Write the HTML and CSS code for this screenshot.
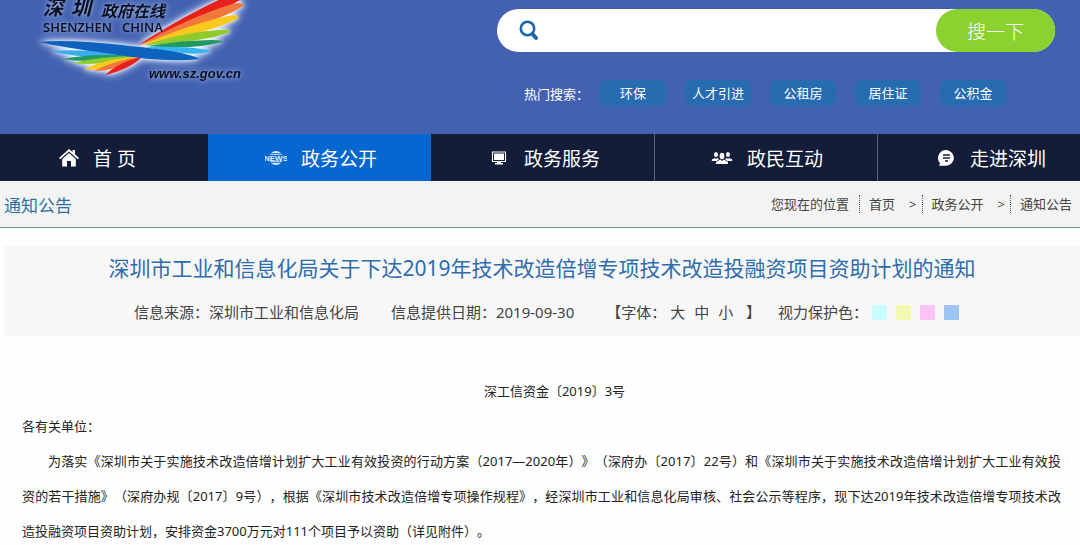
FILE: index.html
```html
<!DOCTYPE html>
<html lang="zh-CN">
<head>
<meta charset="utf-8">
<title>通知公告 - 深圳政府在线</title>
<link rel="stylesheet" href="styles.css">
</head>
<body>
<header class="header">
  <a class="logo" href="#" aria-label="深圳政府在线">
    <svg width="260" height="100" viewBox="0 0 260 100">
      <g class="glow">
        <path fill="#e8201c" d="M138 45 Q185 15 227 -4 Q238 -8 240 0 Q222 12 138 45Z"/>
        <path fill="#f0783a" d="M140 45 Q190 17 232 4 Q244 1 243 6 Q222 20 140 45Z"/>
        <path fill="#fbc81e" d="M142 45 Q190 24 228 16 Q240 14 238 18 Q215 32 142 45Z"/>
        <path fill="#8fcb2c" d="M144 45 Q190 31 221 30 Q232 29 230 32 Q205 42 144 45Z"/>
        <path fill="#1f9a62" d="M146 46 Q185 40 212 40 Q224 40 222 42 Q195 50 146 46Z"/>
        <path fill="#38b4ee" d="M146 47 Q185 46 201 49 Q214 50 209 52 Q190 57 146 47Z"/>
        <path fill="#38aeea" d="M50 51 Q80 48 138 56 Q85 60 50 51Z"/>
        <path fill="#1f9a62" d="M63 59 Q90 53 138 56 Q90 64 63 59Z"/>
        <path fill="#8fcb2c" d="M73 63 Q100 56 139 56 Q98 67 73 63Z"/>
        <path fill="#fbc81e" d="M84 69 Q110 57 140 57 Q104 72 84 69Z"/>
        <path fill="#f0783a" d="M94 71 Q115 60 141 57 Q112 72 94 71Z"/>
        <path fill="#e8201c" d="M105 75 Q118 62 142 57 Q130 69 105 75Z"/>
        <path fill="#0d62be" d="M39 42 Q70 39 130 46 Q185 51 200 59 Q165 63 112 54 Q60 47 39 42Z"/>
      </g>
      <g class="logo-text">
        <text class="logo-mark" x="43" y="15">深</text>
        <text class="logo-mark" x="71" y="15">圳</text>
        <text class="logo-name" x="101" y="17">政府在线</text>
        <text class="logo-latin" x="43" y="32">SHENZHEN</text>
        <text class="logo-latin" x="122" y="32">CHINA</text>
        <text class="logo-url" x="149" y="78">www.sz.gov.cn</text>
      </g>
    </svg>
  </a>
  <div class="search-area">
    <form class="search" role="search">
      <svg class="search-icon" width="20" height="21" viewBox="0 0 20 21"><circle cx="8.500" cy="8.500" r="6.700" fill="none" stroke="#1a67ab" stroke-width="2.600"/><path d="M13.500 14l3.500 4" stroke="#1a67ab" stroke-width="4" stroke-linecap="round"/></svg>
      <input class="search-input" type="text" aria-label="搜索">
      <button class="search-button" type="button">搜一下</button>
    </form>
    <div class="hot">
      <span class="hot-label">热门搜索：</span>
      <a href="#">环保</a><a href="#">人才引进</a><a href="#">公租房</a><a href="#">居住证</a><a href="#">公积金</a>
    </div>
  </div>
</header>
<nav class="nav">
  <a class="home" href="#"><svg width="20" height="18" viewBox="0 0 20 18" fill="#fff"><path d="M0 9 10 0l3.500 3V1H16v4.300L20 9l-1.200 1.200L10 2.500 1.200 10.200z"/><path d="M3.200 10 10 4l6.800 6v7.500H12V12H8v5.500H3.200z"/></svg><span>首 页</span></a>
  <a class="active" href="#"><svg width="22" height="16" viewBox="0 0 22 16"><circle cx="11" cy="8" r="7" fill="#d5e7fb"/><path d="M4 3.500h14M4 12.500h14" stroke="#0567cf" stroke-width=".8" fill="none"/><path fill="#0567cf" d="M0 4.800h22v6.400H0z"/><text class="news" x="11" y="11" text-anchor="middle">NEWS</text></svg><span>政务公开</span></a>
  <a href="#"><svg width="22" height="14" viewBox="0 0 22 14" fill="#fff"><path fill="none" stroke="#fff" stroke-width="1.100" d="M4.500 1h13v9.500h-13z"/><path d="M6 2.500h10V9H6zM9 11h4v1h2v1.500H7V12h2z"/></svg><span>政务服务</span></a>
  <a href="#"><svg width="22" height="14" viewBox="0 0 22 14" fill="#fff"><ellipse cx="5" cy="3.500" rx="2" ry="2.500"/><ellipse cx="17" cy="3.500" rx="2" ry="2.500"/><path d="M.8 10V8.500L4 7l1 1 1.200-1 2 1-2.500 2zM21.200 10V8.500L18 7l-1 1-1.200-1-2 1 2.500 2z"/><ellipse cx="11" cy="5" rx="2.400" ry="3.200"/><path d="M5 13v-2l4.200-2.500L11 10l1.800-1.500L17 11v2z"/></svg><span>政民互动</span></a>
  <a href="#"><svg width="22" height="18" viewBox="0 0 22 18"><path fill="#fff" d="M12 1a8 7.500 0 1 1-1 15.800H5l1-2.500A8 8 0 0 1 12 1z"/><path stroke="#131c38" stroke-width="1.300" d="M9 6h7M9 9h7M11 12h3"/></svg><span>走进深圳</span></a>
</nav>
<div class="location">
  <h2>通知公告</h2>
  <div class="crumbs">
    <span>您现在的位置</span>
    <a href="#">首页</a><i>&gt;</i>
    <a href="#">政务公开</a><i>&gt;</i>
    <a href="#">通知公告</a>
  </div>
</div>
<main>
  <section class="heading">
    <h1>深圳市工业和信息化局关于下达2019年技术改造倍增专项技术改造投融资项目资助计划的通知</h1>
    <div class="meta">
      <span class="source">信息来源：深圳市工业和信息化局</span>
      <span class="date">信息提供日期：2019-09-30</span>
      <span class="sizes">【字体： <button type="button">大</button><button type="button">中</button><button type="button">小</button> 】</span>
      <span class="eye">视力保护色：</span>
      <span class="swatches"><button type="button" class="cyan" aria-label="青色"></button><button type="button" class="yellow" aria-label="黄色"></button><button type="button" class="pink" aria-label="粉色"></button><button type="button" class="blue" aria-label="蓝色"></button></span>
    </div>
  </section>
  <article class="article">
    <p class="number">深工信资金〔2019〕3号</p>
    <p>各有关单位：</p>
    <p class="indent">为落实《深圳市关于实施技术改造倍增计划扩大工业有效投资的行动方案（2017—2020年）》（深府办〔2017〕22号）和《深圳市关于实施技术改造倍增计划扩大工业有效投资的若干措施》（深府办规〔2017〕9号），根据《深圳市技术改造倍增专项操作规程》，经深圳市工业和信息化局审核、社会公示等程序，现下达2019年技术改造倍增专项技术改造投融资项目资助计划，安排资金3700万元对111个项目予以资助（详见附件）。</p>
  </article>
</main>
</body>
</html>
```
FILE: styles.css
```css
* { box-sizing: border-box; }
body {
  margin: 0;
  background: #fefefe;
  color: #333;
  font-family: "Noto Sans", "Noto Sans CJK SC", sans-serif;
  font-size: 13px;
  text-spacing-trim: space-all;
}
a { color: inherit; text-decoration: none; }
button { border: 0; padding: 0; background: none; color: inherit; font: inherit; cursor: pointer; }
h1, h2, p { margin: 0; font-weight: 400; }

.header {
  display: flex;
  justify-content: space-between;
  height: 134px;
  padding-right: 25px;
  background: #4261b0;
}
.logo svg { display: block; }
.glow { filter: drop-shadow(0 0 2px #fff) drop-shadow(0 0 4px #dfe9ff); }
.logo-text { fill: #0b1020; filter: drop-shadow(0 0 3px #b9cdf5); }
.logo-mark { font-size: 20px; font-weight: 700; font-style: italic; }
.logo-name { font-size: 16px; font-weight: 700; font-style: italic; }
.logo-latin { font-family: "Open Sans", sans-serif; font-size: 13px; font-weight: 600; }
.logo-url { font-family: "Liberation Sans", sans-serif; font-size: 13px; font-weight: 700; font-style: italic; }

.search-area { width: 558px; padding-top: 9px; }
.search {
  display: flex;
  align-items: center;
  height: 43px;
  padding-left: 22px;
  border-radius: 22px;
  background: #fff;
}
.search-input { flex: 1; min-width: 0; height: 30px; margin-left: 8px; border: 0; outline: 0; background: none; font: inherit; }
.search-button { width: 119px; height: 43px; border-radius: 22px; background: #8bd12f; color: #fff; font-size: 19px; font-weight: 300; }
.hot { display: flex; align-items: center; gap: 19px; margin-top: 28px; padding-left: 27px; color: #fff; }
.hot-label { width: 57px; white-space: nowrap; }
.hot a { width: 66px; border-radius: 6px; background: #276bb0; line-height: 26px; text-align: center; }

.nav {
  display: grid;
  grid-template-columns: 208fr 223fr 223fr 223fr 203fr;
  background: #131c38;
  color: #fff;
  font-size: 19px;
}
.nav a { display: flex; align-items: center; gap: 14px; height: 47px; padding-left: 56px; border-left: 1px solid #5c6478; white-space: nowrap; }
.nav .home { border-left: 0; padding-left: 59px; }
.nav .active { background: #0567cf; border-color: #0567cf; }
.nav .active + a { border-color: #131c38; }
.news { fill: #e6f1ff; font-family: "Liberation Sans", sans-serif; font-size: 8px; font-weight: 700; }

.location {
  display: flex;
  align-items: center;
  justify-content: space-between;
  height: 47px;
  padding: 0 8px 0 4px;
  border-bottom: 1px solid #5fa57f;
  background: #f3f3f3;
}
.location h2 { color: #33709f; font-size: 17px; font-weight: 400; }
.crumbs { display: flex; align-items: center; color: #444; line-height: 18px; }
.crumbs a { margin-left: 10px; padding-left: 9px; border-left: 1px dotted #555; }
.crumbs i { margin-left: 14px; margin-right: -5px; font-style: normal; }

.heading { margin: 18px 0 0 4px; padding: 4px 0 6px; background: #f7f7f8; text-align: center; }
.heading h1 { color: #2f6cad; font-size: 21px; line-height: 36px; white-space: nowrap; }
.meta { display: flex; justify-content: center; align-items: center; margin-top: 9px; padding-left: 9px; color: #444; font-size: 15px; line-height: 35px; white-space: nowrap; }
.date { margin-left: 32px; }
.sizes { margin-left: 32px; }
.sizes button { margin-right: 9px; }
.eye { margin-left: 17px; }
.swatches { display: flex; gap: 9px; margin-left: 4px; }
.swatches button { width: 15px; height: 15px; }
.cyan { background: #c9fdfd; }
.yellow { background: #f1fab0; }
.pink { background: #fbc4f4; }
.blue { background: #9cc6f1; }

.article { padding: 38px 19px 0 22px; color: #222; line-height: 35px; }
.number { text-align: center; text-indent: 26px; }
.indent { text-align: justify; text-indent: 26px; }
```
